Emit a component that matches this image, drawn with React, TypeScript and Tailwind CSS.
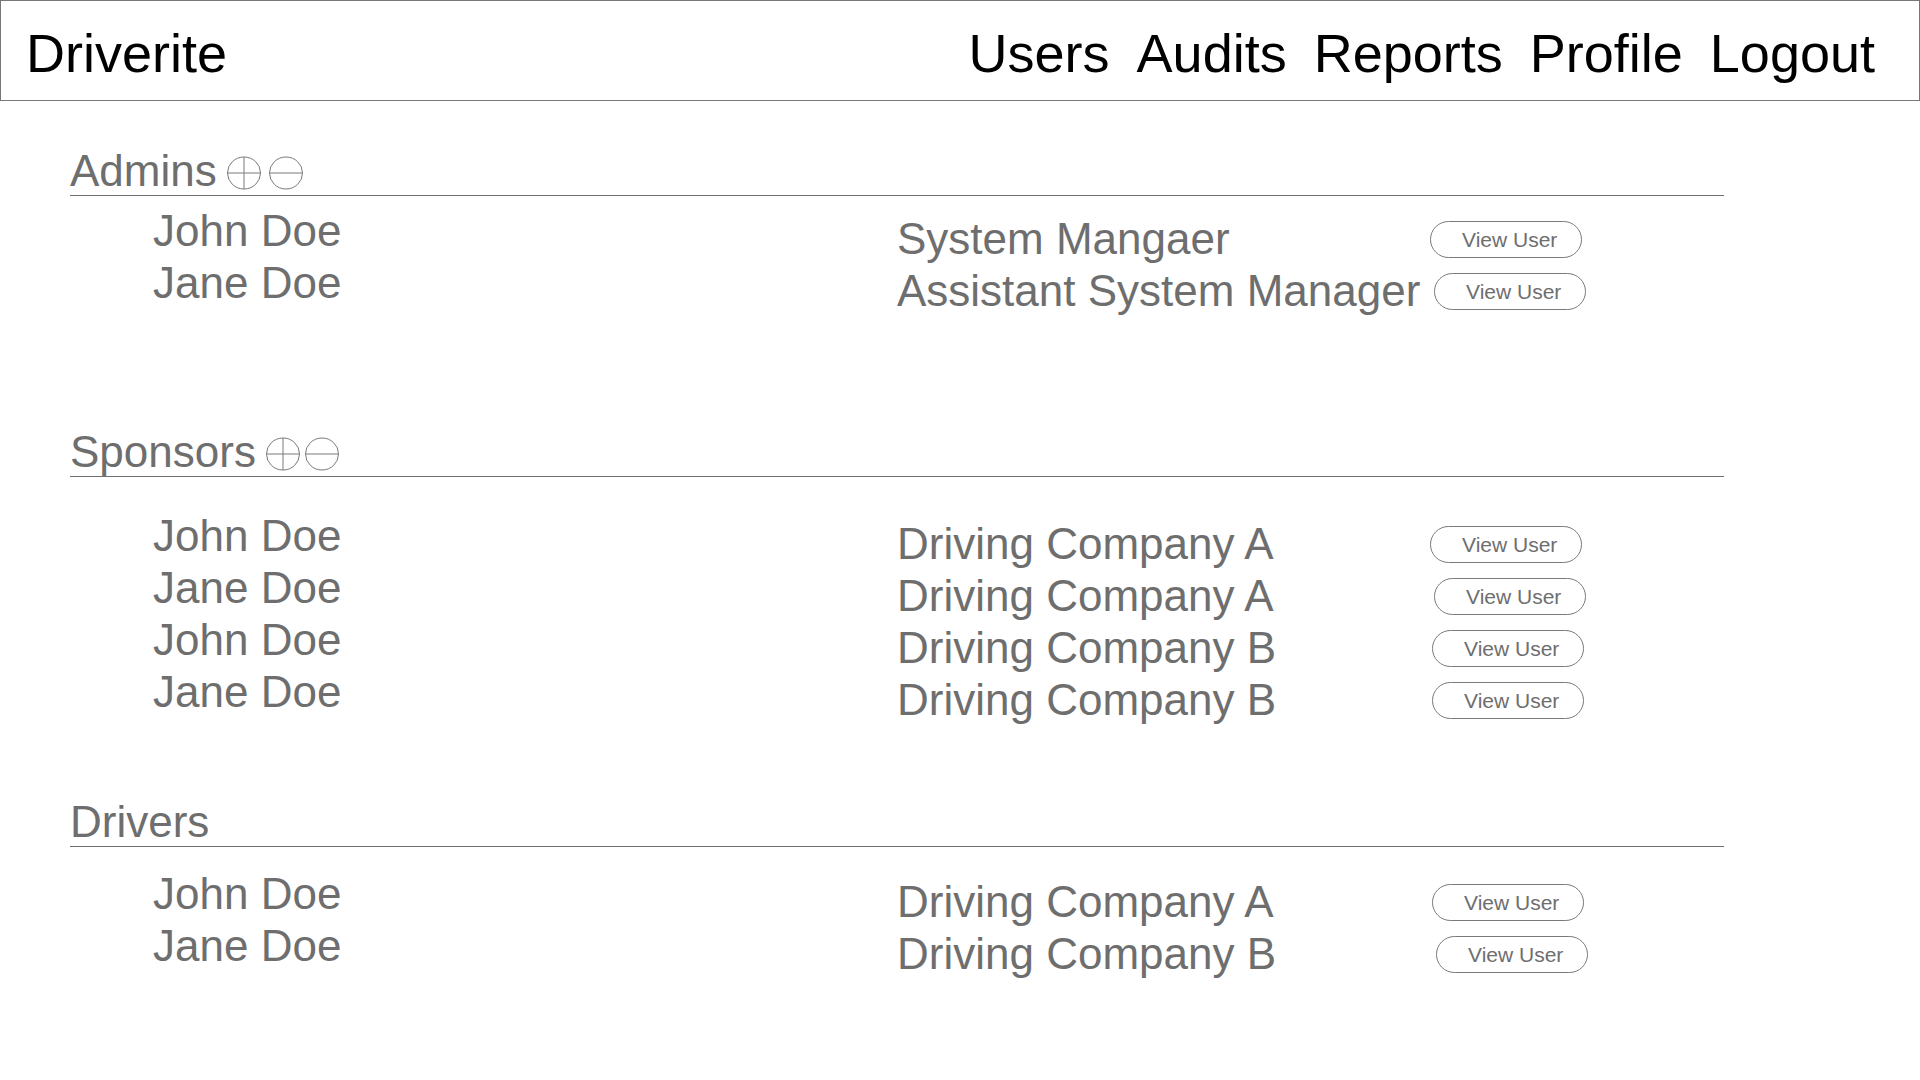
type Row = { name: string; title: string; shift: string }

type Section = {
  label: string
  icons: boolean
  gap: string
  top: string
  namesPad: string
  rowsPad: string
  rows: Row[]
}

const sections: Section[] = [
  {
    label: 'Admins',
    icons: true,
    gap: 'gap-[8px]',
    top: 'mt-[46px]',
    namesPad: 'pt-[9px]',
    rowsPad: 'pt-[17px]',
    rows: [
      { name: 'John Doe', title: 'System Mangaer', shift: 'ml-0' },
      { name: 'Jane Doe', title: 'Assistant System Manager', shift: 'ml-[4px]' },
    ],
  },
  {
    label: 'Sponsors',
    icons: true,
    gap: 'gap-[5px]',
    top: 'mt-[111px]',
    namesPad: 'pt-[33px]',
    rowsPad: 'pt-[41px]',
    rows: [
      { name: 'John Doe', title: 'Driving Company A', shift: 'ml-0' },
      { name: 'Jane Doe', title: 'Driving Company A', shift: 'ml-[4px]' },
      { name: 'John Doe', title: 'Driving Company B', shift: 'ml-[2px]' },
      { name: 'Jane Doe', title: 'Driving Company B', shift: 'ml-[2px]' },
    ],
  },
  {
    label: 'Drivers',
    icons: false,
    gap: 'gap-[8px]',
    top: 'mt-[72px]',
    namesPad: 'pt-[21px]',
    rowsPad: 'pt-[29px]',
    rows: [
      { name: 'John Doe', title: 'Driving Company A', shift: 'ml-[2px]' },
      { name: 'Jane Doe', title: 'Driving Company B', shift: 'ml-[6px]' },
    ],
  },
]

function CircleIcon({ plus }: { plus: boolean }) {
  return (
    <svg width="34" height="34" viewBox="0 0 34 34" fill="none" stroke="#7a7a7a" strokeWidth="1">
      <ellipse cx="17" cy="17" rx="16.5" ry="16" />
      <line x1="0.5" y1="17" x2="33.5" y2="17" />
      {plus && <line x1="17" y1="1" x2="17" y2="33" />}
    </svg>
  )
}

const navItems = ['Users', 'Audits', 'Reports', 'Profile', 'Logout']

export default function App() {
  return (
    <div className="min-h-screen bg-white font-['Liberation_Sans',Arial,sans-serif] text-[#6e6e6e]">
      <header className="flex h-[101px] items-center justify-between border border-[#777777] pl-[25px] pr-[44px] pt-[4px] text-[54px] leading-none text-black">
        <span>Driverite</span>
        <nav className="flex gap-[27px]">
          {navItems.map((item) => (
            <span key={item}>{item}</span>
          ))}
        </nav>
      </header>

      <main className="pl-[70px] pr-[196px]">
        {sections.map((section) => (
          <section key={section.label} className={section.top}>
            <div className="flex h-[49px] items-center border-b border-[#6f6f6f] text-[44px] leading-[48px]">
              <span>{section.label}</span>
              {section.icons && (
                <div className={`ml-[10px] mt-[4px] flex ${section.gap}`}>
                  <CircleIcon plus />
                  <CircleIcon plus={false} />
                </div>
              )}
            </div>

            <div className="flex text-[44px] leading-[52px]">
              <div className={`w-[827px] pl-[83px] ${section.namesPad}`}>
                {section.rows.map((row, i) => (
                  <div key={i}>{row.name}</div>
                ))}
              </div>
              <div className={section.rowsPad}>
                {section.rows.map((row, i) => (
                  <div key={i} className="flex h-[52px] items-center">
                    <span className="w-[533px] whitespace-nowrap">{row.title}</span>
                    <button
                      className={`${row.shift} flex h-[37px] w-[152px] items-center rounded-full border border-[#7a7a7a] pl-[31px] text-[21px] leading-none text-[#6e6e6e]`}
                    >
                      View User
                    </button>
                  </div>
                ))}
              </div>
            </div>
          </section>
        ))}
      </main>
    </div>
  )
}
